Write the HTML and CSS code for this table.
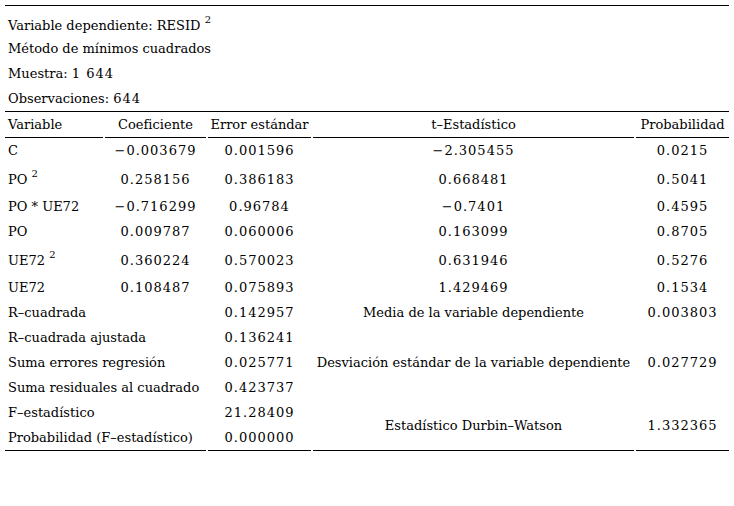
FILE: index.html
```html
<!DOCTYPE html>
<html lang="es">
<head>
<meta charset="utf-8">
<title>Regresión</title>
<link rel="stylesheet" href="styles.css">
</head>
<body>
<table class="reg">
  <colgroup>
    <col class="c1"><col class="c2"><col class="c3"><col class="c4"><col class="c5">
  </colgroup>
  <tr>
    <td class="info" colspan="5">
      <div class="line first">Variable dependiente: RESID <sup>2</sup></div>
      <div class="line">Método de mínimos cuadrados</div>
      <div class="line">Muestra: <span class="n">1 644</span></div>
      <div class="line">Observaciones: <span class="n">644</span></div>
    </td>
  </tr>
  <tr class="head">
    <td class="l">Variable</td>
    <td>Coeficiente</td>
    <td>Error estándar</td>
    <td>t–Estadístico</td>
    <td>Probabilidad</td>
  </tr>
  <tr><td class="l">C</td><td class="n">−0.003679</td><td class="n">0.001596</td><td class="n">−2.305455</td><td class="n">0.0215</td></tr>
  <tr class="sup-row"><td class="l">PO <sup>2</sup></td><td class="n">0.258156</td><td class="n">0.386183</td><td class="n">0.668481</td><td class="n">0.5041</td></tr>
  <tr><td class="l">PO * UE72</td><td class="n">−0.716299</td><td class="n">0.96784</td><td class="n">−0.7401</td><td class="n">0.4595</td></tr>
  <tr><td class="l">PO</td><td class="n">0.009787</td><td class="n">0.060006</td><td class="n">0.163099</td><td class="n">0.8705</td></tr>
  <tr class="sup-row"><td class="l">UE72 <sup>2</sup></td><td class="n">0.360224</td><td class="n">0.570023</td><td class="n">0.631946</td><td class="n">0.5276</td></tr>
  <tr><td class="l">UE72</td><td class="n">0.108487</td><td class="n">0.075893</td><td class="n">1.429469</td><td class="n">0.1534</td></tr>
  <tr><td class="l" colspan="2">R–cuadrada</td><td class="n">0.142957</td><td>Media de la variable dependiente</td><td class="n">0.003803</td></tr>
  <tr><td class="l" colspan="2">R–cuadrada ajustada</td><td class="n">0.136241</td><td></td><td></td></tr>
  <tr><td class="l" colspan="2">Suma errores regresión</td><td class="n">0.025771</td><td>Desviación estándar de la variable dependiente</td><td class="n">0.027729</td></tr>
  <tr><td class="l" colspan="2">Suma residuales al cuadrado</td><td class="n">0.423737</td><td></td><td></td></tr>
  <tr><td class="l" colspan="2">F–estadístico</td><td class="n">21.28409</td><td class="last" rowspan="2">Estadístico Durbin–Watson</td><td class="n last" rowspan="2">1.332365</td></tr>
  <tr class="end"><td class="l" colspan="2">Probabilidad (F–estadístico)</td><td class="n">0.000000</td></tr>
</table>
</body>
</html>
```

FILE: styles.css
```css
html, body {
  margin: 0;
  padding: 0;
  background: #ffffff;
}

body {
  font-family: "DejaVu Serif", "Liberation Serif", serif;
  font-size: 13px;
  color: #000000;
}

.reg {
  margin: 5px 0 0 3px;
  width: 728px;
  border-collapse: separate;
  border-spacing: 2px 0;
  table-layout: fixed;
}

.c1 { width: 98px; }
.c2 { width: 101px; }
.c3 { width: 103px; }
.c4 { width: 321px; }
.c5 { width: 93px; }

.reg td {
  padding: 0;
  height: 25px;
  line-height: 25px;
  text-align: center;
  vertical-align: middle;
  white-space: nowrap;
}

.reg td.l {
  text-align: left;
  padding-left: 3px;
}

.n {
  letter-spacing: 1px;
}

.reg td.info {
  text-align: left;
  padding-left: 3px;
  border-top: 1px solid #000;
  border-bottom: 1px solid #000;
}

.line {
  height: 25px;
  line-height: 25px;
}

.line.first {
  height: 30px;
  line-height: 39px;
}

.head td {
  border-bottom: 1px solid #000;
}

.sup-row td {
  height: 29px;
  line-height: 29px;
  padding-top: 2px;
}

sup {
  font-size: 10px;
  line-height: 0;
  vertical-align: 7px;
  letter-spacing: 0;
}

.end td,
.reg td.last {
  border-bottom: 1px solid #000;
}
```
